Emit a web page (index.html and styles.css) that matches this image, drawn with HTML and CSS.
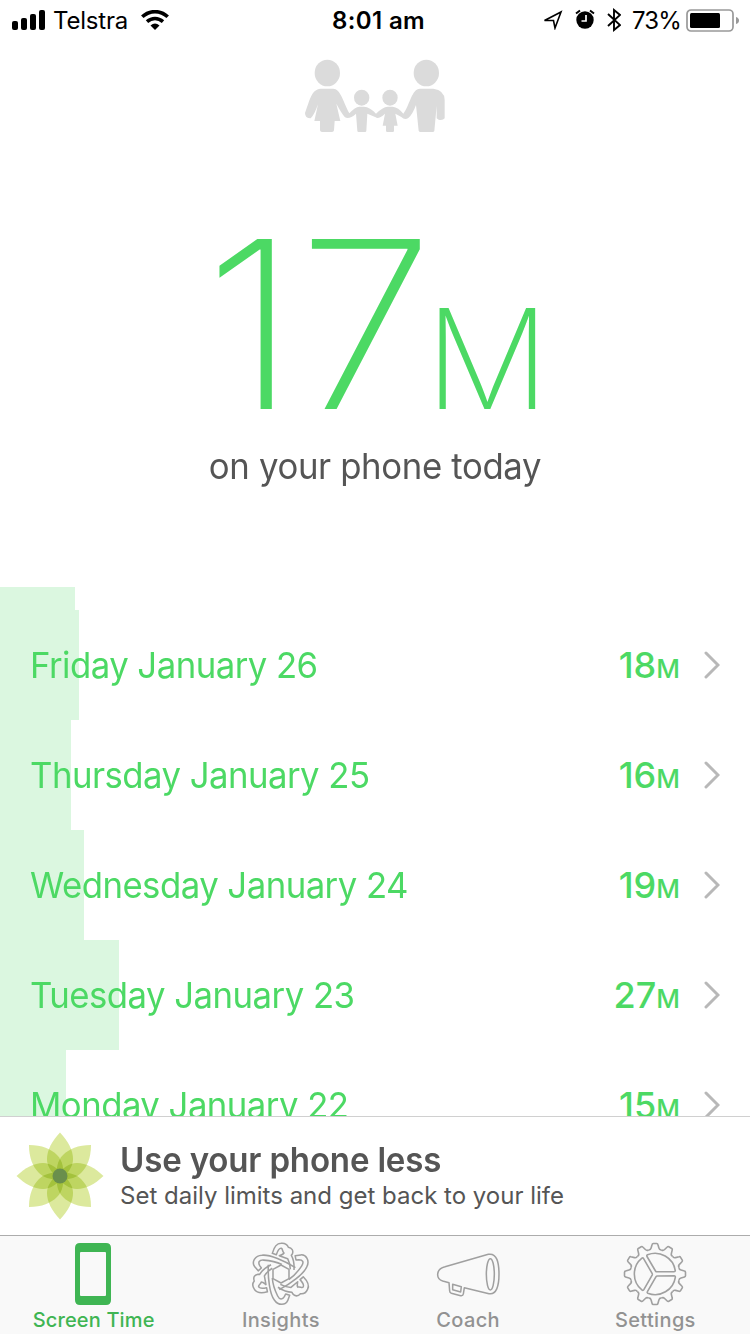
FILE: index.html
```html
<!DOCTYPE html>
<html lang="en">
<head>
<meta charset="utf-8">
<title>Screen Time</title>
<link rel="stylesheet" href="styles.css">
</head>
<body>
<div class="app">
  <header class="status">
    <div class="status-left">
      <svg class="signal" viewBox="0 0 33 20" width="33" height="20"><rect x="0" y="11" width="6" height="9" rx="2"/><rect x="9" y="8" width="6" height="12" rx="2"/><rect x="18" y="4" width="6" height="16" rx="2"/><rect x="27" y="0" width="6" height="20" rx="2"/></svg>
      <span class="carrier">Telstra</span>
      <svg class="wifi" viewBox="0 0 28 20" width="28" height="20"><g fill="none" stroke="#000" stroke-width="3.6"><path d="M1.300 6.800C8.500-.1 19.500-.1 26.700 6.800"/><path d="M6 11.600C10.800 7.400 17.200 7.400 22 11.600"/></g><path d="M9.500 15.600Q14 11.500 18.500 15.600L14 20Z"/></svg>
    </div>
    <span class="time">8:01 am</span>
    <div class="status-right">
      <svg class="arrow" viewBox="0 0 20 20" width="20" height="20"><path d="M1.500 10.500L18 2L12 18L10.500 10.500Z" fill="none" stroke="#000" stroke-width="1.600"/></svg>
      <svg class="alarm" viewBox="0 0 20 20" width="20" height="20"><circle cx="10" cy="11" r="8.700"/><path d="M1 4.500L5 1.500M19 4.500L15 1.500" stroke="#000" stroke-width="2"/><path d="M11 6V12H6.500" stroke="#fff" stroke-width="1.700" fill="none"/></svg>
      <svg class="bluetooth" viewBox="0 0 14 24" width="14" height="24"><path d="M1 6L13 17L7 22V2L13 7L1 18" fill="none" stroke="#000" stroke-width="1.900"/></svg>
      <span class="percent">73%</span>
      <svg class="battery" viewBox="0 0 54 24" width="54" height="24"><rect x="1" y="1" width="46" height="21" rx="4" fill="none" stroke="#999" stroke-width="1.700"/><rect x="4" y="4" width="30" height="15" rx="1.500"/><path d="M50 8Q53 9 53 11.500Q53 14 50 15Z" fill="#999"/></svg>
    </div>
  </header>

  <svg class="family" viewBox="0 0 510 300" width="170" height="100">
    <ellipse cx="112" cy="84" rx="38" ry="40"/><ellipse cx="409" cy="84" rx="38" ry="40"/>
    <ellipse cx="215" cy="158" rx="23" ry="24"/><ellipse cx="300" cy="158" rx="23" ry="24"/>
    <path d="M92 131H130C150 131 158 165 178 205Q195 186 208 185H222Q240 186 258 206Q278 186 293 185H308Q325 187 340 206C360 180 365 131 390 131H430Q464 136 464 165V220Q458 227 446 224L440 220V182L433 258Q432 261 428 261H392Q387 261 386 257L378 180Q368 208 355 219Q344 226 334 216L316 206L323 242H312V258Q312 261 308 261H292Q288 261 288 257V242H278L285 206Q265 224 257 217L232 206L229 257Q229 261 225 261H206Q202 261 202 257L198 206Q178 224 165 217Q154 204 139 176L151 228H134L132 256Q131 261 126 261H96Q91 261 90 256V228H73L84 178Q73 210 62 220Q45 220 45 204C60 165 64 133 92 131Z"/>
  </svg>

  <section class="hero">
    <div class="total"><span class="total-num">17</span><span class="total-unit">M</span></div>
    <p class="caption">on your phone today</p>
  </section>

  <main class="days">
    <div class="today-bar"></div>
    <div class="day"><div class="bar" style="width:79px"></div><span class="date">Friday January 26</span><span class="mins">18<small>M</small></span><svg class="chev" viewBox="0 0 16 28" width="16" height="28"><path d="M2 2L14 14L2 26"/></svg></div>
    <div class="day"><div class="bar" style="width:70.5px"></div><span class="date">Thursday January 25</span><span class="mins">16<small>M</small></span><svg class="chev" viewBox="0 0 16 28" width="16" height="28"><path d="M2 2L14 14L2 26"/></svg></div>
    <div class="day"><div class="bar" style="width:84px"></div><span class="date">Wednesday January 24</span><span class="mins">19<small>M</small></span><svg class="chev" viewBox="0 0 16 28" width="16" height="28"><path d="M2 2L14 14L2 26"/></svg></div>
    <div class="day"><div class="bar" style="width:119px"></div><span class="date">Tuesday January 23</span><span class="mins">27<small>M</small></span><svg class="chev" viewBox="0 0 16 28" width="16" height="28"><path d="M2 2L14 14L2 26"/></svg></div>
    <div class="day"><div class="bar" style="width:66px"></div><span class="date">Monday January 22</span><span class="mins">15<small>M</small></span><svg class="chev" viewBox="0 0 16 28" width="16" height="28"><path d="M2 2L14 14L2 26"/></svg></div>
  </main>

  <aside class="promo">
    <svg class="flower" viewBox="-44 -44 88 88" width="88" height="88">
      <defs>
        <path id="petal" d="M0-43.500C8-35 13-26 13-17C13-9 8-3 0 4C-8-3-13-9-13-17C-13-26-8-35 0-43.500Z"/>
        <path id="corner" d="M31-31C31-18 27-9 21-3C15 3 7 4-3 3C-4-7-3-15 3-21C9-27 18-31 31-31Z"/>
      </defs>
      <use href="#petal"/><use href="#petal" transform="rotate(90)"/><use href="#petal" transform="rotate(180)"/><use href="#petal" transform="rotate(270)"/>
      <use href="#corner"/><use href="#corner" transform="rotate(90)"/><use href="#corner" transform="rotate(180)"/><use href="#corner" transform="rotate(270)"/>
      <circle class="core" r="7.500"/>
    </svg>
    <div class="promo-text"><h2>Use your phone less</h2><p>Set daily limits and get back to your life</p></div>
  </aside>

  <nav class="tabs">
    <a class="tab active"><svg viewBox="0 0 64 64" width="64" height="64"><path fill="#3fb553" fill-rule="evenodd" d="M19 1H45Q50 1 50 6V58Q50 63 45 63H19Q14 63 14 58V6Q14 1 19 1ZM20 10Q19 10 19 11V53Q19 54 20 54H44Q45 54 45 53V11Q45 10 44 10Z"/></svg><span>Screen Time</span></a>
    <a class="tab"><svg class="atom" viewBox="-96 -96 192 192" width="64" height="64">
      <defs>
        <g id="orbit">
          <path d="M39-12C40-28 38-44 31-56L34-60C38-70 33-78 22-80C19-88 10-93 0-92C-12-92-20-84-26-62L-14-58C-10-70-5-78 1-77C6-75 3-68 9-63C6-58 0-57-5-55L20-46C25-36 28-26 28-14"/>
          <path d="M-38-28C-40 10-34 60-20 78C-8 96 14 94 20 80L26 64L14 60L10 68C4 78-4 78-10 66C-18 50-25 30-26 12"/>
        </g>
      </defs>
      <g class="thick"><use href="#orbit"/><use href="#orbit" transform="rotate(120)"/><use href="#orbit" transform="rotate(240)"/>
      <path d="M0-27L24-14V14L0 27L-24 14V-14Z"/></g>
    </svg><span>Insights</span></a>
    <a class="tab"><svg viewBox="60 18 192 192" width="64" height="64"><g class="thick" transform="translate(12 0)"><path d="M75 92L205 55C231 50 237 80 237 115C237 150 229 177 207 173L133 155L130 174Q129 180 122 179L94 172Q89 170 89 165L87 140L68 135C47 128 47 99 75 92Z"/><ellipse cx="211" cy="115" rx="12" ry="47"/><path d="M98 145L124 152L122 168L98 161Z"/></g></svg><span>Coach</span></a>
    <a class="tab"><svg viewBox="-32 -32 64 64" width="64" height="64">
      <defs><path id="tooth" d="M-6.500-24.200Q-4.500-23.800-3.900-26L-2.900-29.500Q-2.700-30.500-1.700-30.500H1.700Q2.700-30.500 2.900-29.500L3.900-26Q4.500-23.800 6.500-24.200"/><path id="sector" d="M2-2.200Q1-2.200.5-3L-8-17.500Q-8.600-18.700-7.500-19.200A20.500 20.500 0 0 1 20.300-3.400Q20.300-2.200 19-2.200Z"/></defs>
      <use href="#tooth"/><use href="#tooth" transform="rotate(30)"/><use href="#tooth" transform="rotate(60)"/><use href="#tooth" transform="rotate(90)"/><use href="#tooth" transform="rotate(120)"/><use href="#tooth" transform="rotate(150)"/><use href="#tooth" transform="rotate(180)"/><use href="#tooth" transform="rotate(210)"/><use href="#tooth" transform="rotate(240)"/><use href="#tooth" transform="rotate(270)"/><use href="#tooth" transform="rotate(300)"/><use href="#tooth" transform="rotate(330)"/>
      <use href="#sector"/><use href="#sector" transform="rotate(120)"/><use href="#sector" transform="rotate(240)"/>
    </svg><span>Settings</span></a>
  </nav>
</div>
</body>
</html>
```
FILE: styles.css
```css
* { box-sizing: border-box; }
body { margin: 0; background: #fff; font-family: Inter, "Liberation Sans", sans-serif; }
svg { display: block; flex: none; }
h2, p { margin: 0; }
.app { width: 750px; height: 1334px; display: flex; flex-direction: column; overflow: hidden; }

.status { height: 45px; flex: none; display: grid; grid-template-columns: 1fr auto 1fr; align-items: start; padding: 0 10px 0 12px; font-size: 24px; line-height: 42px; color: #000; }
.status-left, .status-right { display: flex; align-items: flex-start; }
.status-right { justify-content: flex-end; }
.signal { margin: 10px 8px 0 0; }
.carrier { width: 75px; letter-spacing: -.2px; white-space: nowrap; }
.wifi { margin: 10px 0 0 13px; }
.time { font-weight: 600; letter-spacing: .4px; padding-left: 5px; }
.arrow { margin: 10px 12px 0 0; }
.alarm { margin: 9px 12px 0 0; }
.bluetooth { margin: 8px 11px 0 0; }
.percent { width: 48px; margin-right: 6px; white-space: nowrap; letter-spacing: -.9px; }
.battery { margin-top: 9px; }

.family { fill: #dbdbdb; margin-left: 290px; }

.hero { height: 442px; flex: none; text-align: center; }
.total { height: 286px; padding: 44px 0 0 4px; line-height: 270px; color: #4cd964; white-space: nowrap; }
.total-num, .total-unit { display: inline-block; }
.total-num { font-size: 233px; font-weight: 200; transform: scaleX(1.057); transform-origin: 0 50%; margin-right: 3px; }
.total-unit { font-size: 139px; font-weight: 180; }
.caption { padding-top: 11px; font-size: 36px; line-height: 49px; letter-spacing: -.37px; color: #555; transform: scaleX(.965); }

.days { height: 529px; flex: none; overflow: hidden; color: #4cd964; }
.today-bar { width: 75px; height: 23px; background: #dbf7e0; }
.day { height: 110px; display: grid; grid-template-columns: 30px 1fr auto 24px 16px 30px; align-items: center; }
.bar { grid-area: 1 / 1 / 2 / 3; height: 110px; background: #dbf7e0; }
.date { grid-area: 1 / 2; font-size: 36px; letter-spacing: -.55px; transform: scaleX(.965); transform-origin: 0 50%; }
.mins { grid-area: 1 / 3; font-size: 36px; font-weight: 500; }
.mins small { font-size: 26px; font-weight: 500; }
.chev { grid-area: 1 / 5; fill: none; stroke: #b8b8b8; stroke-width: 3; stroke-linecap: round; }

.promo { height: 119px; flex: none; display: flex; align-items: center; border-top: 1px solid #d0d0d0; padding-left: 16px; gap: 16px; color: #555; }
.flower { fill: #dce99d; isolation: isolate; }
.flower use { mix-blend-mode: multiply; }
.core { fill: #6a8f4c; }
.promo h2 { font-size: 34px; line-height: 40px; font-weight: 600; letter-spacing: -.2px; transform: scaleX(.973); transform-origin: 0 50%; }
.promo p { font-size: 24px; line-height: 32px; }

.tabs { height: 99px; flex: none; display: grid; grid-template-columns: repeat(4, 1fr); background: #f9f9f9; border-top: 1px solid #acacac; padding: 6px 1px 0 0; color: #929292; font-size: 20px; line-height: 24px; font-weight: 500; letter-spacing: .35px; }
.tab { display: flex; flex-direction: column; align-items: center; gap: 2px; fill: none; stroke: #a0a0a0; stroke-width: 1.6; stroke-linejoin: round; }
.tab svg { margin-left: -1px; }
.tab .atom { margin-left: 1px; }
.tab span { stroke: none; }
.active { color: #3fb553; stroke: none; letter-spacing: .15px; }
.thick { stroke-width: 4.6; }
```
